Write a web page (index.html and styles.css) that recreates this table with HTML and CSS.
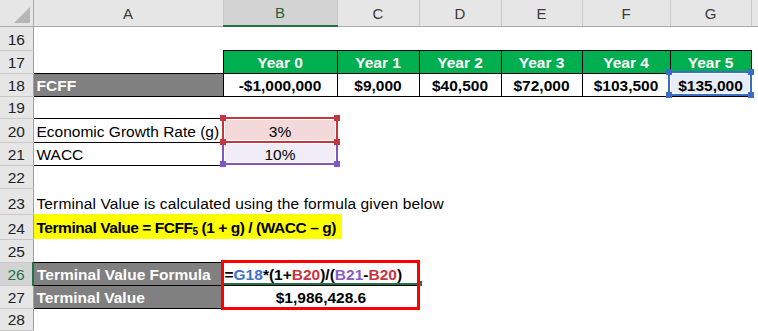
FILE: index.html
```html
<!DOCTYPE html>
<html>
<head>
<meta charset="utf-8">
<link rel="stylesheet" href="styles.css">
</head>
<body>
<div class="sheet">
<table class="grid">
<colgroup>
<col class="c-rh"><col class="c-a"><col class="c-b"><col class="c-c"><col class="c-d"><col class="c-e"><col class="c-f"><col class="c-g"><col class="c-h">
</colgroup>
<thead>
<tr class="r-head">
<th class="corner"><svg class="tri" width="16" height="16" viewBox="0 0 16 16"><polygon points="0,16 16,16 16,0" fill="#b5b5b5"/></svg></th>
<th>A</th><th class="col-active">B</th><th>C</th><th>D</th><th>E</th><th>F</th><th>G</th><th></th>
</tr>
</thead>
<tbody>
<tr class="r24"><th class="rh">16</th><td></td><td></td><td></td><td></td><td></td><td></td><td></td><td></td></tr>
<tr class="r23"><th class="rh">17</th><td></td><td class="yr">Year 0</td><td class="yr">Year 1</td><td class="yr">Year 2</td><td class="yr">Year 3</td><td class="yr">Year 4</td><td class="yr">Year 5</td><td></td></tr>
<tr class="r23"><th class="rh">18</th><td class="lbl">FCFF</td><td class="val">-$1,000,000</td><td class="val">$9,000</td><td class="val">$40,500</td><td class="val">$72,000</td><td class="val">$103,500</td><td class="val sel-blue">$135,000</td><td></td></tr>
<tr class="r22"><th class="rh">19</th><td></td><td></td><td></td><td></td><td></td><td></td><td></td><td></td></tr>
<tr class="r24"><th class="rh">20</th><td class="inp inp-top">Economic Growth Rate (g)</td><td class="pct fill-red">3%</td><td></td><td></td><td></td><td></td><td></td><td></td></tr>
<tr class="r23"><th class="rh">21</th><td class="inp">WACC</td><td class="pct fill-purple">10%</td><td></td><td></td><td></td><td></td><td></td><td></td></tr>
<tr class="r23"><th class="rh">22</th><td></td><td></td><td></td><td></td><td></td><td></td><td></td><td></td></tr>
<tr class="r26"><th class="rh">23</th><td class="note">Terminal Value is calculated using the formula given below</td><td></td><td></td><td></td><td></td><td></td><td></td><td></td></tr>
<tr class="r25"><th class="rh">24</th><td class="hl-cell"><span class="hl">Terminal Value = FCFF<sub>5</sub> (1 + g) / (WACC – g)</span></td><td></td><td></td><td></td><td></td><td></td><td></td><td></td></tr>
<tr class="r23"><th class="rh">25</th><td></td><td></td><td></td><td></td><td></td><td></td><td></td><td></td></tr>
<tr class="r23"><th class="rh rh-active">26</th><td class="lbl">Terminal Value Formula</td><td class="formula">=<span class="ref-b">G18</span>*(1+<span class="ref-r">B20</span>)/(<span class="ref-p">B21</span>-<span class="ref-r">B20</span>)</td><td></td><td></td><td></td><td></td><td></td><td></td></tr>
<tr class="r23"><th class="rh">27</th><td class="lbl">Terminal Value</td><td class="val" colspan="2">$1,986,428.6</td><td></td><td></td><td></td><td></td><td></td></tr>
<tr class="r22"><th class="rh">28</th><td></td><td></td><td></td><td></td><td></td><td></td><td></td><td></td></tr>
<tr class="r23"><th class="rh"></th><td></td><td></td><td></td><td></td><td></td><td></td><td></td><td></td></tr>
</tbody>
</table>

<div class="refbox box-blue"><i class="h tl"></i><i class="h tr"></i><i class="h bl"></i><i class="h br"></i></div>
<div class="refbox box-purple"><i class="h tl"></i><i class="h tr"></i><i class="h bl"></i><i class="h br"></i></div>
<div class="refbox box-red"><i class="h tl"></i><i class="h tr"></i><i class="h bl"></i><i class="h br"></i></div>
<div class="active-line"><i class="fill-handle"></i></div>
<div class="callout"></div>
</div>
</body>
</html>
```

FILE: styles.css
```css
html, body {
  margin: 0;
  background: #ffffff;
}
body {
  font-family: "Liberation Sans", Arial, sans-serif;
  font-size: 15.5px;
  color: #000;
  overflow: hidden;
}
.sheet {
  position: relative;
  width: 758px;
  height: 331px;
  overflow: hidden;
}
.grid {
  border-collapse: collapse;
  table-layout: fixed;
  width: 791px;
}
.c-rh { width: 33px; }
.c-a { width: 190px; }
.c-b { width: 114px; }
.c-c { width: 82px; }
.c-d { width: 82px; }
.c-e { width: 81px; }
.c-f { width: 88px; }
.c-g { width: 81px; }
.c-h { width: 40px; }

.grid th, .grid td {
  padding: 0 3px 1px;
  line-height: 18px;
  vertical-align: bottom;
  white-space: nowrap;
  overflow: visible;
  text-align: left;
}

.r-head { height: 26px; }
.r22 { height: 22px; }
.r23 { height: 23px; }
.r24 { height: 24px; }
.r25 { height: 25px; }
.r26 { height: 26px; }

.r-head th {
  background: #e6e6e6;
  font-weight: normal;
  font-size: 15px;
  color: #3a3a3a;
  text-align: center;
  border-right: 1px solid #c9c9c9;
  border-bottom: 1px solid #ababab;
  padding-bottom: 3px;
}
.r-head th.corner {
  position: relative;
  border-right: 1px solid #ababab;
  padding: 0;
}
.tri {
  display: block;
  position: absolute;
  right: 3px;
  bottom: 3px;
}
.r-head th.col-active {
  background: #d3d3d3;
  color: #1f5f3f;
  border-bottom: 2px solid #217346;
}

.rh {
  background: #e6e6e6;
  font-weight: normal;
  color: #222;
  text-align: center !important;
  border-right: 1px solid #9f9f9f;
  border-bottom: 1px solid #c9c9c9;
}
.rh-active {
  background: #d3d3d3;
  color: #217346;
  border-right: 2px solid #217346;
}

.yr {
  background: #00b050;
  color: #fff;
  font-weight: bold;
  text-align: center !important;
  border: 1px solid #000;
}
.val {
  font-weight: bold;
  text-align: center !important;
  border: 1px solid #000;
}
.lbl {
  background: #808080;
  color: #fff;
  font-weight: bold;
  border: 1px solid #000;
}
.sel-blue { background: #e7edf8; }

.inp { border-bottom: 1px solid #000; }
.inp-top { border-top: 1px solid #000; }
.pct { text-align: center !important; }
.fill-red { background: #f4d9da; }
.fill-purple { background: #f0edf8; }

.note { letter-spacing: 0.12px; }

.hl-cell { padding: 0 !important; vertical-align: top !important; }
.hl {
  display: block;
  width: 308px;
  height: 25px;
  box-sizing: border-box;
  padding: 5px 0 0 3px;
  line-height: 18px;
  background: #ffff00;
  font-weight: bold;
  letter-spacing: -0.45px;
}
.hl sub {
  font-size: 10px;
  line-height: 0;
  vertical-align: -2px;
}

.formula {
  font-weight: bold;
  padding-left: 1px !important;
}
.ref-b { color: #3b72d0; }
.ref-r { color: #c8343f; }
.ref-p { color: #8a5cc4; }

.refbox {
  position: absolute;
  box-sizing: border-box;
  border: 2px solid;
  box-shadow: inset 0 0 0 1px #fff;
}
.refbox .h {
  position: absolute;
  width: 6px;
  height: 6px;
  background: currentColor;
}
.h.tl { left: -4px; top: -4px; }
.h.tr { right: -4px; top: -4px; }
.h.bl { left: -4px; bottom: -4px; }
.h.br { right: -4px; bottom: -4px; }

.box-blue {
  left: 668px; top: 71px; width: 84px; height: 25px;
  color: #3c6dc6; border-color: #3c6dc6;
}
.box-purple {
  left: 222px; top: 141px; width: 116px; height: 24px;
  color: #8457c0; border-color: #8457c0;
}
.box-red {
  left: 222px; top: 117px; width: 116px; height: 26px;
  color: #c4373f; border-color: #c4373f;
}

.active-line {
  position: absolute;
  left: 223px; top: 283px;
  width: 195px; height: 2px;
  background: #217346;
}
.fill-handle {
  position: absolute;
  right: -4px; top: -2px;
  width: 5px; height: 5px;
  background: #217346;
}
.callout {
  position: absolute;
  left: 221px; top: 260px;
  width: 199px; height: 50px;
  box-sizing: border-box;
  border: 3px solid #ff0000;
}
```
